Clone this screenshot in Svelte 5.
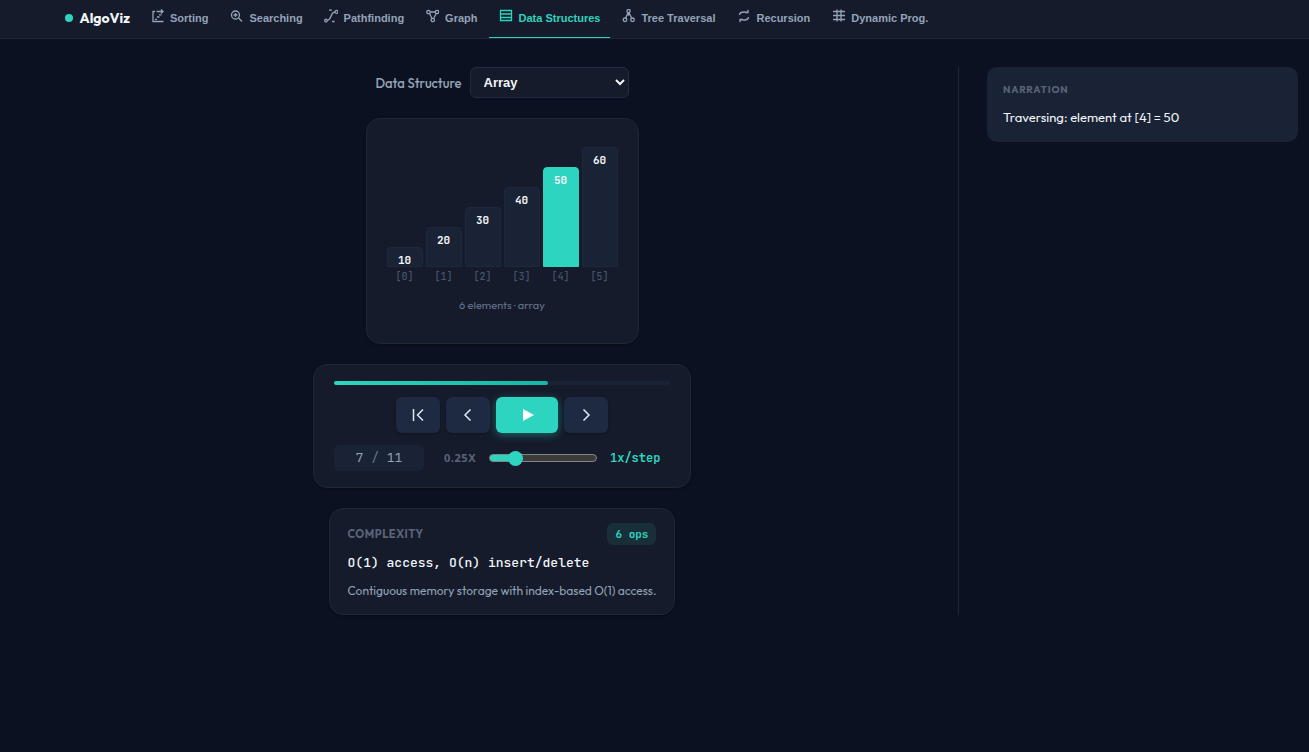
<script>
	const tabs = [
		{ name: 'Sorting', icon: 'sorting' },
		{ name: 'Searching', icon: 'searching' },
		{ name: 'Pathfinding', icon: 'path' },
		{ name: 'Graph', icon: 'graph' },
		{ name: 'Data Structures', icon: 'data' },
		{ name: 'Tree Traversal', icon: 'tree' },
		{ name: 'Recursion', icon: 'recursion' },
		{ name: 'Dynamic Prog.', icon: 'grid' }
	];
	const structures = ['Array', 'Stack', 'Queue', 'Linked List'];
	const values = [10, 20, 30, 40, 50, 60];
	const total = 11;

	let activeTab = $state('Data Structures');
	let structure = $state('Array');
	let step = $state(7);
	let speed = $state(1);
	let active = $derived(step - 3);
	let progress = $derived((step / total) * 100);
</script>

<header class="nav">
	<a class="brand" href="#home"><span class="dot"></span>AlgoViz</a>
	<nav class="tabs">
		{#each tabs as tab}
			<button class="tab" class:tab--active={activeTab === tab.name} onclick={() => (activeTab = tab.name)}>
				<svg class="tab-icon" viewBox="0 0 14 14" aria-hidden="true">
					{#if tab.icon === 'sorting'}
						<path d="M5 2.5H3v10h10.5M6.500 2.5h6M11 .5l2 2-2 2M9 5.8h2.500M7 8h2.500M5 10.300h2" />
					{:else if tab.icon === 'searching'}
						<circle cx="6.5" cy="6" r="4" />
						<path d="M9.5 9l3.5 3.500M6.500 4v4M4.500 6h4" />
					{:else if tab.icon === 'path'}
						<circle cx="2" cy="11.5" r="1.3" />
						<circle cx="12.5" cy="2.8" r="1.5" />
						<path d="M3.3 11.3C8 10.500 6 3.500 11 3M5 1.200h3M8 12.500h2.500" />
					{:else if tab.icon === 'graph'}
						<circle cx="3.5" cy="3" r="1.7" />
						<circle cx="12" cy="3" r="1.7" />
						<circle cx="7.8" cy="11" r="1.7" />
						<path d="M5.2 3h5.100M4.500 4.500L7 9.500M11.200 4.500L8.600 9.500" />
					{:else if tab.icon === 'data'}
						<path d="M1.5 1.5h11v10h-11zM1.5 5h11M1.5 8.5h11" />
					{:else if tab.icon === 'tree'}
						<circle cx="7.5" cy="2" r="1.6" />
						<circle cx="4" cy="10.8" r="1.8" />
						<circle cx="11.5" cy="10.8" r="1.8" />
						<path d="M7 3.7L4.700 9M8 3.700l2.600 5.300M7.500 3.700v3" />
					{:else if tab.icon === 'recursion'}
						<path d="M3.5 6c0-3 4-3.500 8.500-2.500M12 .8v2.700H9M12.500 8c0 3-4 3.500-8.500 2.500M4 13.200v-2.700h3" />
					{:else}
						<path d="M6 .5v12M10 .5v12M2 2.5h12M2 6.5h12M2 10.5h12" />
					{/if}
				</svg>
				{tab.name}
			</button>
		{/each}
	</nav>
</header>

<main class="layout">
	<section class="stage">
		<div class="picker">
			<label for="structure">Data Structure</label>
			<select id="structure" bind:value={structure}>
				{#each structures as s}
					<option>{s}</option>
				{/each}
			</select>
		</div>

		<div class="card chart">
			<div class="bars">
				{#each values as value, i}
					<div class="column">
						<div class="bar" class:bar--active={i === active} style="height: {value * 2}px">{value}</div>
						<span class="index">[{i}]</span>
					</div>
				{/each}
			</div>
			<p class="caption">{values.length} elements · array</p>
		</div>

		<div class="card player">
			<div class="progress"><div class="progress-fill" style="width: {progress}%"></div></div>
			<div class="buttons">
				<button class="btn" aria-label="First step" onclick={() => (step = 1)}>
					<svg viewBox="0 0 16 16"><path d="M3.5 2v12M13 2.5L7.5 8l5.5 5.5" /></svg>
				</button>
				<button class="btn" aria-label="Previous step" onclick={() => (step = Math.max(1, step - 1))}>
					<svg viewBox="0 0 16 16"><path d="M10.5 2.5L5 8l5.5 5.5" /></svg>
				</button>
				<button class="btn btn--play" aria-label="Play">
					<svg viewBox="0 0 16 16"><path class="solid" d="M4 2l11 6-11 6z" /></svg>
				</button>
				<button class="btn" aria-label="Next step" onclick={() => (step = Math.min(total, step + 1))}>
					<svg viewBox="0 0 16 16"><path d="M5.5 2.5L11 8l-5.5 5.5" /></svg>
				</button>
			</div>
			<div class="status">
				<div class="counter">{step} <span class="slash">/</span> {total}</div>
				<label class="speed-min" for="speed">0.25X</label>
				<input id="speed" class="speed" type="range" min="0.25" max="4" step="0.25" bind:value={speed} />
				<output class="speed-value" for="speed">{speed}x/step</output>
			</div>
		</div>

		<div class="card complexity">
			<div class="complexity-head">
				<h2>Complexity</h2>
				<span class="ops">6 ops</span>
			</div>
			<p class="formula">O(1) access, O(n) insert/delete</p>
			<p class="note">Contiguous memory storage with index-based O(1) access.</p>
		</div>
	</section>

	<aside class="side">
		<div class="narration">
			<h2>Narration</h2>
			<p>Traversing: element at [4] = 50</p>
		</div>
	</aside>
</main>

<style>
	:global(body) {
		background: #0b1120;
		color: #f1f5f9;
		font-family: Outfit, Lato, sans-serif;
	}

	:global(*) {
		box-sizing: border-box;
	}

	h2,
	p {
		margin: 0;
	}

	.nav {
		display: flex;
		height: 39px;
		padding: 0 5%;
		background: #151b2b;
		border-bottom: 1px solid #1e263c;
	}

	.brand {
		display: flex;
		align-items: center;
		gap: 6px;
		margin-right: 10px;
		padding-bottom: 2px;
		color: #f1f5f9;
		font-size: 14px;
		font-weight: 700;
		text-decoration: none;
	}

	.dot {
		width: 8px;
		height: 8px;
		border-radius: 50%;
		background: #2dd4bf;
	}

	.tabs {
		display: flex;
		gap: 1px;
	}

	.tab {
		display: flex;
		align-items: center;
		gap: 6px;
		padding: 0 10px 1px;
		border: 0;
		border-bottom: 1px solid transparent;
		background: none;
		color: #94a3b8;
		font: bold 11px "Liberation Sans", Arial, sans-serif;
		white-space: nowrap;
		cursor: pointer;
	}

	.tab--active {
		color: #2dd4bf;
		border-bottom-color: #2dd4bf;
	}

	.tab-icon {
		width: 14px;
		height: 14px;
		margin-bottom: 4px;
		fill: none;
		stroke: currentColor;
		stroke-width: 1.3;
	}

	.layout {
		display: grid;
		grid-template-columns: 1fr 340px;
		padding: 28px 11px 28px 46px;
	}

	.stage {
		display: flex;
		flex-direction: column;
		align-items: center;
		gap: 20px;
	}

	.picker {
		display: flex;
		align-items: center;
		gap: 8px;
		color: #94a3b8;
		font-size: 13px;
		font-weight: 500;
	}

	.picker select {
		width: 159px;
		height: 31px;
		padding: 0 9px;
		border: 1px solid #222b45;
		border-radius: 6px;
		background: #151b2b;
		color: #f1f5f9;
		font: bold 13px "Liberation Sans", Arial, sans-serif;
	}

	.card {
		border: 1px solid #1e2638;
		border-radius: 14px;
		background: #151b2b;
		box-shadow: 0 1px 3px rgba(0, 0, 0, 0.3);
	}

	.chart {
		padding: 28px 20px 30px;
	}

	.bars {
		display: flex;
		align-items: flex-end;
		gap: 3px;
	}

	.column {
		display: flex;
		flex-direction: column;
		align-items: center;
		gap: 3px;
	}

	.bar {
		width: 36px;
		padding-top: 4px;
		border: 1px solid #1e2740;
		border-radius: 4px 4px 0 0;
		background: #1a2235;
		font: bold 11px/16px "JetBrains Mono", "DejaVu Sans Mono", monospace;
		text-align: center;
	}

	.bar--active {
		border-color: #2dd4bf;
		background: #2dd4bf;
	}

	.index {
		color: #475569;
		font: 500 10px/13px "JetBrains Mono", "DejaVu Sans Mono", monospace;
	}

	.caption {
		margin-top: 14px;
		color: #64748b;
		font-size: 11px;
		line-height: 16px;
		text-align: center;
	}

	.player {
		width: 378px;
		padding: 16px 20px;
	}

	.progress {
		height: 4px;
		border-radius: 2px;
		background: #1a2235;
	}

	.progress-fill {
		height: 4px;
		border-radius: 2px;
		background: linear-gradient(90deg, #2dd4bf, #14b8a6);
	}

	.buttons {
		display: flex;
		justify-content: center;
		gap: 6px;
		margin: 12px 0;
	}

	.btn {
		display: flex;
		align-items: center;
		justify-content: center;
		width: 44px;
		height: 36px;
		padding: 0;
		border: 0;
		border-radius: 6px;
		background: #1e2942;
		box-shadow: 0 1px 2px rgba(0, 0, 0, 0.3);
		color: #e2e8f0;
		cursor: pointer;
	}

	.btn--play {
		width: 62px;
		background: #2dd4bf;
		box-shadow: 0 2px 8px rgba(45, 212, 191, 0.4);
		color: #fff;
	}

	.btn svg {
		width: 16px;
		height: 16px;
		fill: none;
		stroke: currentColor;
		stroke-width: 1.5;
	}

	.btn .solid {
		fill: currentColor;
		stroke: none;
	}

	.status {
		display: flex;
		align-items: center;
	}

	.counter {
		width: 90px;
		height: 26px;
		margin-right: 20px;
		border-radius: 6px;
		background: #1a2235;
		color: #94a3b8;
		font: 13px/26px "JetBrains Mono", "DejaVu Sans Mono", monospace;
		text-align: center;
	}

	.slash {
		color: #64748b;
	}

	.speed-min {
		width: 32px;
		color: #5a6478;
		font: bold 11px/16px "Noto Sans", sans-serif;
		letter-spacing: 0.05em;
	}

	.speed {
		appearance: none;
		width: 108px;
		height: 8px;
		margin: 0 13px;
		border: 1px solid #858585;
		border-radius: 4px;
		background: linear-gradient(90deg, #2dd4bf 24%, #3b3b3b 24%);
	}

	.speed::-webkit-slider-thumb {
		appearance: none;
		width: 15px;
		height: 15px;
		border-radius: 50%;
		background: #2dd4bf;
	}

	.speed-value {
		color: #2dd4bf;
		font: bold 12px "JetBrains Mono", "DejaVu Sans Mono", monospace;
	}

	.complexity {
		padding: 14px 18px;
	}

	.complexity-head {
		display: flex;
		align-items: center;
		justify-content: space-between;
	}

	h2 {
		color: #5a6478;
		font-size: 11px;
		line-height: 16px;
		font-weight: 700;
		letter-spacing: 0.05em;
		text-transform: uppercase;
	}

	.ops {
		padding: 0 8px;
		border-radius: 6px;
		background: #182f3a;
		color: #2dd4bf;
		font: bold 11px/22px "JetBrains Mono", "DejaVu Sans Mono", monospace;
	}

	.formula {
		margin: 8px 0 9px;
		font: 500 13px/20px "JetBrains Mono", "DejaVu Sans Mono", monospace;
	}

	.note {
		color: #94a3b8;
		font-size: 12px;
		line-height: 18px;
	}

	.side {
		padding-left: 28px;
		border-left: 1px solid #1e263c;
	}

	.narration {
		padding: 16px 16px 15px;
		border-radius: 10px;
		background: #1a2235;
	}

	.narration h2 {
		font-size: 10px;
		line-height: 13px;
		letter-spacing: 0.08em;
	}

	.narration p {
		margin-top: 11px;
		font-size: 13px;
		line-height: 20px;
	}
</style>
